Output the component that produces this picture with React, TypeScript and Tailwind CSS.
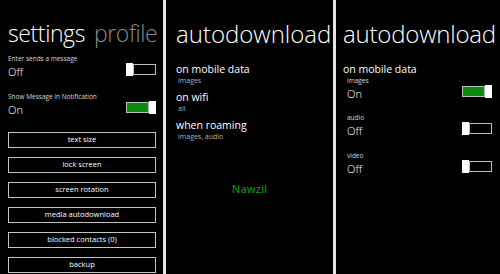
import React from 'react';

const Toggle: React.FC<{ on?: boolean }> = ({ on }) => {
  if (on) {
    return (
      <div className="flex h-[13px] w-[30px] items-center">
        <div className="h-[11px] flex-1 border border-[#bdbdbd] bg-[#0a8c0a]" />
        <div className="h-[13px] w-[7px] bg-white" />
      </div>
    );
  }
  return (
    <div className="flex h-[13px] w-[30px] items-center">
      <div className="h-[13px] w-[7px] bg-white" />
      <div className="h-[11px] flex-1 border border-[#bdbdbd] bg-black" />
    </div>
  );
};

const SettingRow: React.FC<{ label: string; on?: boolean; className?: string }> = ({ label, on, className }) => (
  <div className={className}>
    <div className="whitespace-nowrap text-[6.5px] leading-[8px] text-[#d8d8d8]">{label}</div>
    <div className="flex items-end justify-between">
      <span className="text-[11px] font-light leading-[9px]">{on ? 'On' : 'Off'}</span>
      <Toggle on={on} />
    </div>
  </div>
);

const MenuButton: React.FC<{ label: string }> = ({ label }) => (
  <div className="flex h-[16px] items-center justify-center border border-[#c4c4c4] text-[7.5px] leading-none">
    {label}
  </div>
);

const OptionItem: React.FC<{ title: string; sub: string; className?: string }> = ({ title, sub, className }) => (
  <div className={className}>
    <div className="text-[10.5px] leading-[12px]">{title}</div>
    <div className="mt-[1px] pl-[2px] text-[7px] leading-[9px] text-[#b4b4b4]">{sub}</div>
  </div>
);

const buttons = ['text size', 'lock screen', 'screen rotation', 'media autodownload', 'blocked contacts (0)', 'backup'];

export default function App() {
  return (
    <div className="flex h-[274px] w-[500px] overflow-hidden bg-black font-['Open_Sans','Liberation_Sans',sans-serif] text-white">
      {/* settings pivot */}
      <section className="w-[163px] overflow-hidden pl-[8px] pr-[7px]">
        <h1 className="mt-[22px] whitespace-nowrap text-[23px] font-light leading-[23px] tracking-[-0.4px]">
          settings<span className="ml-[9px] text-[#8a8a8a]">profile</span>
        </h1>
        <SettingRow label="Enter sends a message" className="mt-[10px]" />
        <SettingRow label="Show Message in Notification" on className="mt-[17px]" />
        <div className="mt-[18px] flex flex-col gap-[9px]">
          {buttons.map(b => (
            <MenuButton key={b} label={b} />
          ))}
        </div>
      </section>

      <div className="w-[3px] bg-[#e4e4e4]" />

      {/* autodownload list */}
      <section className="flex w-[167px] flex-col overflow-hidden pl-[10px]">
        <h1 className="mt-[22px] whitespace-nowrap text-[24px] font-light leading-[24px]">autodownload</h1>
        <OptionItem title="on mobile data" sub="images" className="mt-[17px]" />
        <OptionItem title="on wifi" sub="all" className="mt-[6px]" />
        <OptionItem title="when roaming" sub="images, audio" className="mt-[6px]" />
        <div className="mt-[42px] pr-[10px] text-center text-[11px] font-semibold leading-[12px] text-[#0a8a0a]">Nawzil</div>
      </section>

      <div className="w-[3px] bg-[#e4e4e4]" />

      {/* mobile data detail */}
      <section className="flex-1 overflow-hidden pl-[7px] pr-[6px]">
        <h1 className="mt-[22px] whitespace-nowrap text-[24px] font-light leading-[24px] tracking-[-0.2px]">autodownload</h1>
        <div className="mt-[17px] text-[10.5px] leading-[12px]">on mobile data</div>
        <div className="pl-[4px] pr-[2px]">
          <SettingRow label="images" on className="mt-[2px]" />
          <SettingRow label="audio" className="mt-[16px]" />
          <SettingRow label="video" className="mt-[17px]" />
        </div>
      </section>
    </div>
  );
}
